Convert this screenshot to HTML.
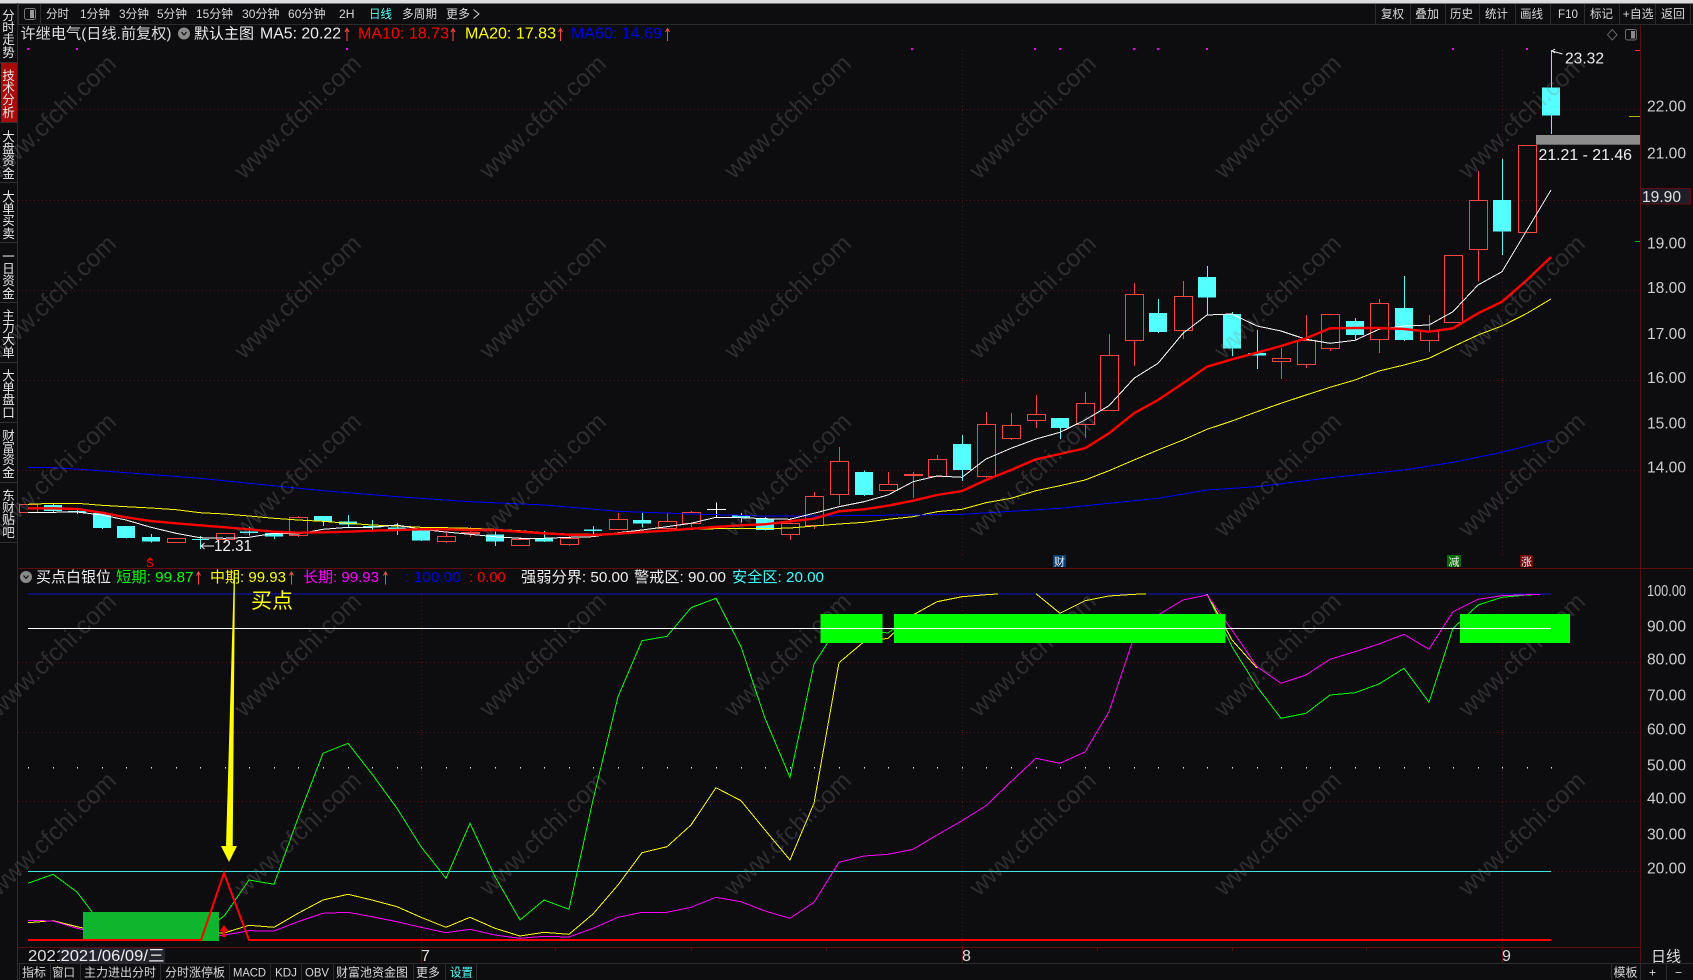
<!DOCTYPE html>
<html lang="zh"><head><meta charset="utf-8"><title>许继电气</title>
<style>
html,body{margin:0;padding:0;background:#0d0d10;width:1693px;height:980px;overflow:hidden}
svg{position:absolute;left:0;top:0;display:block}
text{font-family:"Liberation Sans","Noto Sans CJK SC",sans-serif;fill:#d8d8d8}
.t{font-size:12px}.h{font-size:15px}.a{font-size:16px;fill:#cfcfcf}
.w{font-size:24.7px;fill:rgba(128,128,128,.28)}
.c{shape-rendering:crispEdges}
.s{position:absolute;left:2px;width:13px;font:12.5px/12.2px "Liberation Sans","Noto Sans CJK SC",sans-serif;color:#e8e8e8;word-break:break-all;text-align:center}
</style></head><body>
<svg width="1693" height="980" viewBox="0 0 1693 980" xmlns="http://www.w3.org/2000/svg">
<rect width="1693" height="980" fill="#0d0d10"/>
<!-- top strip and toolbar -->
<rect width="1693" height="3.5" fill="#dcdcdc"/>
<path d="M18 24.5H1693" stroke="#2c2c2e"/>
<path d="M18.5 4V24M40.5 4V24M1375.5 4V24M1410.5 4V24M1445.5 4V24M1479.5 4V24M1515.5 4V24M1550.5 4V24M1584.5 4V24M1619.5 4V24M1655.5 4V24M1690.5 4V24" stroke="#2c2c2e"/>
<rect x="24.5" y="8.5" width="11" height="11" rx="2" fill="none" stroke="#777"/><rect x="30" y="10" width="4" height="8" fill="#999"/>
<g class="t">
<text class="t" x="46" y="18" textLength="23" lengthAdjust="spacingAndGlyphs">分时</text>
<text class="t" x="80" y="18" textLength="30" lengthAdjust="spacingAndGlyphs">1分钟</text>
<text class="t" x="119" y="18" textLength="30" lengthAdjust="spacingAndGlyphs">3分钟</text>
<text class="t" x="157" y="18" textLength="30" lengthAdjust="spacingAndGlyphs">5分钟</text>
<text class="t" x="196" y="18" textLength="37" lengthAdjust="spacingAndGlyphs">15分钟</text>
<text class="t" x="242" y="18" textLength="37.5" lengthAdjust="spacingAndGlyphs">30分钟</text>
<text class="t" x="288" y="18" textLength="37.5" lengthAdjust="spacingAndGlyphs">60分钟</text>
<text class="t" x="339" y="18" textLength="15.5" lengthAdjust="spacingAndGlyphs">2H</text>
<text class="t" x="369" y="18" textLength="23" lengthAdjust="spacingAndGlyphs" style="fill:#54ffff">日线</text>
<text class="t" x="402" y="18" textLength="35" lengthAdjust="spacingAndGlyphs">多周期</text>
<text class="t" x="446" y="18" textLength="24" lengthAdjust="spacingAndGlyphs">更多</text>
<path d="M473.5 9.5L479 14L473.5 18.5" fill="none" stroke="#d8d8d8"/>
<text class="t" x="1381" y="18" textLength="23" lengthAdjust="spacingAndGlyphs">复权</text>
<text class="t" x="1415" y="18" textLength="24" lengthAdjust="spacingAndGlyphs">叠加</text>
<text class="t" x="1450" y="18" textLength="23" lengthAdjust="spacingAndGlyphs">历史</text>
<text class="t" x="1485" y="18" textLength="23" lengthAdjust="spacingAndGlyphs">统计</text>
<text class="t" x="1520" y="18" textLength="23" lengthAdjust="spacingAndGlyphs">画线</text>
<text class="t" x="1558" y="18" textLength="20" lengthAdjust="spacingAndGlyphs">F10</text>
<text class="t" x="1590" y="18" textLength="23" lengthAdjust="spacingAndGlyphs">标记</text>
<text class="t" x="1622.7" y="18" textLength="31" lengthAdjust="spacingAndGlyphs">+自选</text>
<text class="t" x="1661" y="18" textLength="24" lengthAdjust="spacingAndGlyphs">返回</text>
</g>
<!-- sidebar -->
<path d="M17.5 3V980" stroke="#2c2c2e"/>
<rect x="1" y="63" width="16" height="59" fill="#a80a0a"/>
<path d="M0 62.5H17M0 122.5H17M0 182.5H17M0 242.5H17M0 302.5H17M0 362.5H17M0 422.5H17M0 482.5H17M0 542.5H17" stroke="#303032"/>
<!-- grids -->
<g stroke="#641212" stroke-dasharray="1 3" fill="none">
<path d="M18 109.5H1640M18 200.5H1640M18 290.5H1640M18 380.5H1640M18 470.5H1640"/>
<path d="M18 662.5H1640M18 732.5H1640M18 801.5H1640M18 871.5H1640"/>
<path d="M962.5 50V555M1502.5 50V555M962.5 594V947M1502.5 594V947M421.5 594V947"/>
</g>
<g stroke="#5f0c0c" fill="none">
<path d="M1640.5 25V963M18 568.5H1693M18 947.5H1640M555.5 947V951M691.5 947V951M826.5 947V951M1097.5 947V951M1232.5 947V951M1366.5 947V951M421.5 947V963M962.5 947V963M1502.5 947V963"/>
</g>
<path d="M18 963.5H1693" stroke="#2c2c2e"/>
<path d="M19.5 964V980M50.5 964V980M80.5 964V980M160.5 964V980M229.5 964V980M270.5 964V980M301.5 964V980M333.5 964V980M413.5 964V980M445.5 964V980M476.5 964V980M1611.5 964V980M1640.5 964V980M1666.5 964V980" stroke="#2c2c2e"/>
<!-- magenta dots -->
<g fill="#ff00ff"><rect x="27" y="48" width="2" height="2"/><rect x="76" y="48" width="2" height="2"/><rect x="346" y="48" width="2" height="2"/><rect x="911" y="48" width="2" height="2"/><rect x="1034" y="48" width="2" height="2"/><rect x="1059" y="48" width="2" height="2"/><rect x="1133" y="48" width="2" height="2"/><rect x="1157" y="48" width="2" height="2"/><rect x="1206" y="48" width="2" height="2"/><rect x="1452" y="48" width="2" height="2"/><rect x="1526" y="48" width="2" height="2"/></g>
<!-- red candles -->
<path fill="none" stroke="#f44444" d="
M19.5 504.5H37.5V512.5H19.5Z
M167.5 538.5H185.5V542.5H167.5Z
M225.5 539V543M216.5 533.5H234.5V539.5H216.5Z
M298.5 516V517.5M298.5 535.5V537M289.5 517.5H307.5V535.5H289.5Z
M446.5 533V536.5M446.5 541.5V543M437.5 536.5H455.5V541.5H437.5Z
M470.5 527V532M470.5 534V537M461.5 532.5H479.5V533.5H461.5Z
M520.5 537V539M511.5 539.5H529.5V545.5H511.5Z
M569.5 535V538M569.5 544.5V546M560.5 538.5H578.5V544.5H560.5Z
M618.5 513V519.5M609.5 519.5H627.5V529.5H609.5Z
M667.5 513V521.5M667.5 528.5V530M658.5 521.5H676.5V528.5H658.5Z
M691.5 511V512.5M691.5 523.5V527M682.5 512.5H700.5V523.5H682.5Z
M790.5 518V523.5M790.5 534V540M781.5 523.5H799.5V534.5H781.5Z
M814.5 492V496.5M814.5 525.5V529M805.5 496.5H823.5V525.5H805.5Z
M839.5 447V461.5M839.5 494.5V505M830.5 461.5H848.5V494.5H830.5Z
M888.5 472V484.5M879.5 484.5H897.5V490.5H879.5Z
M913.5 472V474.5M913.5 476V498M904.5 474.5H922.5V475.5H904.5Z
M937.5 455V459.5M928.5 459.5H946.5V476.5H928.5Z
M986.5 412V424.5M986.5 476.5V478M977.5 424.5H995.5V476.5H977.5Z
M1011.5 413V425.5M1011.5 438.5V440M1002.5 425.5H1020.5V438.5H1002.5Z
M1036.5 395V414.5M1036.5 420.5V428M1027.5 414.5H1045.5V420.5H1027.5Z
M1085.5 392V403.5M1085.5 424.5V438M1076.5 403.5H1094.5V424.5H1076.5Z
M1109.5 334V355.5M1100.5 355.5H1118.5V410.5H1100.5Z
M1134.5 283V294.5M1134.5 340.5V366M1125.5 294.5H1143.5V340.5H1125.5Z
M1183.5 281V296.5M1183.5 330.5V339M1174.5 296.5H1192.5V330.5H1174.5Z
M1281.5 348V358.5M1281.5 361.5V379M1272.5 358.5H1290.5V361.5H1272.5Z
M1306.5 315V340.5M1306.5 364.5V368M1297.5 340.5H1315.5V364.5H1297.5Z
M1330.5 348.5V351M1321.5 314.5H1339.5V348.5H1321.5Z
M1379.5 299V303.5M1379.5 339.5V353M1370.5 303.5H1388.5V339.5H1370.5Z
M1429.5 315V331.5M1429.5 340.5V352M1420.5 331.5H1438.5V340.5H1420.5Z
M1444.5 255.5H1462.5V322.5H1444.5Z
M1478.5 171V200.5M1478.5 249.5V281.5M1469.5 200.5H1487.5V249.5H1469.5Z
M1518.5 145.5H1536.5V232.5H1518.5Z"/>
<!-- cyan candles wicks -->
<path fill="none" stroke="#54ffff" d="M53.5 503V513M77.5 508V514M102.5 513V529M126.5 526V538.5M151.5 534V542.5M200.5 536V549M192 539.5H209M249.5 527V535.5M274.5 531V539M323.5 516V526M348.5 515V527.5M372.5 520V530M397.5 523V535M421.5 528V541M495.5 531.5V546M544.5 531V542M593.5 526V535M642.5 513V527.5M741.5 513V522.5M765.5 517V530.5M864.5 470.5V496M962.5 435V481M1060.5 418V439M1158.5 299V333M1207.5 266V315M1232.5 312V356M1257.5 330V369M1355.5 318V340M1404.5 276V341M1502.5 159V255M1551.5 50V134"/>
<path fill="#54ffff" d="M44 505h18v6H44ZM68 511h18v1.5H68ZM93 513h18v15H93ZM117 526h18v12H117ZM142 537h18v4.5H142ZM240 531.5h18v1.5h-18ZM265 533h18v3.5H265ZM314 516h18v5.5H314ZM339 521.5h18v3H339ZM363 526h18v1.5H363ZM388 527.5h18v2.5H388ZM412 530.5h18v10H412ZM486 534.5h18v7H486ZM535 538.5h18v3H535ZM584 529.5h18v1.5H584ZM633 520h18v3.5H633ZM732 515.5h18v2H732ZM756 518.5h18v11.5H756ZM855 472h18v23H855ZM953 444h18v26H953ZM1051 418h18v10h-18ZM1149 313h18v19H1149ZM1198 277h18v20.5H1198ZM1223 314h18v34.5H1223ZM1248 353h18v2.5H1248ZM1346 321h18v14H1346ZM1395 308h18v32H1395ZM1493 200h18v31.5H1493ZM1542 87.5h18v28H1542Z"/>
<path stroke="#fff" fill="none" d="M716.5 502.5V518M707 509.5H726"/>
<!-- MAs -->
<polyline class="c" fill="none" stroke="#ffff00" stroke-width="1" points="28,504.3 53,503.3 77,503.3 102,505.3 126,506.7 151,508 176,509.7 200,512.7 225,514 249,516 274,518.3 298,520 323,521.3 348,523.3 372,525 397,526 421,527.3 446,527.7 470,528.3 495,529.3 520,530.7 544,532.7 569,534 593,534.3 618,533.3 642,532 667,530.7 691,529.3 716,528.7 741,528.3 765,528.7 790,528 814,526 839,524 864,522.3 888,519.3 913,516.7 937,511.7 962,509.3 986,502.7 1011,498.3 1036,490.7 1060,485.7 1085,480 1109,470.7 1134,460 1158,450 1183,440 1207,429.3 1232,421 1257,411.7 1281,403.3 1306,395 1330,387.3 1355,380 1379,371 1404,365 1429,358.3 1453,346.7 1478,335 1502,326 1527,313.3 1551,299"/>
<polyline class="c" fill="none" stroke="#0000ff" stroke-width="1" points="28,467.7 52,467.7 76,469 126,472.7 200,478.3 249,483.3 323,490.7 397,496.7 470,501.7 544,505 618,511.3 691,514 765,516 850,515.7 962,514.3 1060,508.3 1158,498.3 1207,490 1257,486.7 1330,477.7 1404,470 1453,462.3 1502,452.3 1551,440"/>
<polyline class="c" fill="none" stroke="#ffffff" stroke-width="1" points="28,512.3 53,512.3 77,512 102,515 126,520 151,527.3 176,533.3 200,537.7 225,538.3 249,537.3 274,533.3 298,534 323,529.3 348,527.3 372,527.3 397,525 421,529.3 446,532 470,534.3 495,536.7 520,538.3 544,538.3 569,537.3 593,536.7 618,532.7 642,530 667,526.7 691,523.3 716,517.3 741,517.7 765,518.7 790,519.3 814,513.3 839,506.7 864,501.7 888,495 913,481.7 937,476 962,477.3 986,459 1011,448.3 1036,439 1060,432.3 1085,420 1109,405.7 1134,378.3 1158,363.3 1183,333.3 1207,315 1232,314 1257,326 1281,331 1306,339.3 1330,343.3 1355,340.3 1379,329.3 1404,326 1429,325 1453,311.7 1478,285 1502,271.7 1527,230 1551,190"/>
<polyline fill="none" stroke="#ff0000" stroke-width="2.4" points="28,508.3 53,508.3 77,509 102,512.7 126,517.3 151,521 176,523.3 200,525.3 225,527.3 249,529.3 274,531.7 298,532.7 323,532.3 348,531.7 372,530.7 397,530 421,529.3 446,529.3 470,530 495,530 520,531.7 544,533.3 569,534.7 593,535 618,533.7 642,532 667,530.7 691,528.7 716,527 741,525.3 765,524.3 790,521.3 814,518.7 839,511.3 864,509.3 888,505.7 913,500.7 937,495 962,491 986,480 1011,470 1036,459.3 1060,454 1085,448.3 1109,433.3 1134,413.3 1158,400 1183,383.3 1207,366.7 1232,359.3 1257,352.7 1281,346 1306,338.3 1330,328.3 1355,328 1379,328 1404,329 1429,331.7 1453,328.3 1478,313.3 1502,301.7 1527,280 1551,257"/>
<!-- top arrow, high/low labels -->
<path d="M1562.5 54L1552 51L1555 49M1552 51L1555 53" fill="none" stroke="#eee"/>
<text class="a" x="1565" y="63.5" textLength="39" lengthAdjust="spacingAndGlyphs" style="fill:#eee">23.32</text>
<path d="M214 546H201M204.5 543L201 546L204.5 549" fill="none" stroke="#eee"/>
<text class="a" x="214" y="551" textLength="38" lengthAdjust="spacingAndGlyphs" style="fill:#eee">12.31</text>
<rect x="1536" y="135" width="104" height="9.7" fill="#8c8c8c"/>
<text class="a" x="1538.5" y="160" textLength="93.500" lengthAdjust="spacingAndGlyphs" style="fill:#eee">21.21 - 21.46</text>
<!-- markers -->
<text x="150" y="567" font-size="12" text-anchor="middle" style="fill:#f00">S</text>
<path d="M150 557l2.5 3.5h-5Z" fill="#f00"/>
<rect x="1053" y="555" width="13" height="12" fill="#0c3c6c"/><text x="1059.5" y="565.5" font-size="11" text-anchor="middle" style="fill:#eee">财</text>
<rect x="1447" y="555" width="14" height="12" fill="#0a6a0a"/><text x="1454" y="565.5" font-size="11" text-anchor="middle" style="fill:#eee">减</text>
<rect x="1520" y="555" width="13" height="12" fill="#700808"/><text x="1526.5" y="565.5" font-size="11" text-anchor="middle" style="fill:#eee">涨</text>
<!-- lower lines -->
<path d="M28 594H1551" stroke="#1414c8" fill="none"/>
<g fill="#ddd"><rect x="28" y="767" width="1" height="1.5"/><rect x="53" y="767" width="1" height="1.5"/><rect x="77" y="767" width="1" height="1.5"/><rect x="102" y="767" width="1" height="1.5"/><rect x="126" y="767" width="1" height="1.5"/><rect x="151" y="767" width="1" height="1.5"/><rect x="176" y="767" width="1" height="1.5"/><rect x="200" y="767" width="1" height="1.5"/><rect x="225" y="767" width="1" height="1.5"/><rect x="249" y="767" width="1" height="1.5"/><rect x="274" y="767" width="1" height="1.5"/><rect x="298" y="767" width="1" height="1.5"/><rect x="323" y="767" width="1" height="1.5"/><rect x="348" y="767" width="1" height="1.5"/><rect x="372" y="767" width="1" height="1.5"/><rect x="397" y="767" width="1" height="1.5"/><rect x="421" y="767" width="1" height="1.5"/><rect x="446" y="767" width="1" height="1.5"/><rect x="470" y="767" width="1" height="1.5"/><rect x="495" y="767" width="1" height="1.5"/><rect x="520" y="767" width="1" height="1.5"/><rect x="544" y="767" width="1" height="1.5"/><rect x="569" y="767" width="1" height="1.5"/><rect x="593" y="767" width="1" height="1.5"/><rect x="618" y="767" width="1" height="1.5"/><rect x="642" y="767" width="1" height="1.5"/><rect x="667" y="767" width="1" height="1.5"/><rect x="691" y="767" width="1" height="1.5"/><rect x="716" y="767" width="1" height="1.5"/><rect x="741" y="767" width="1" height="1.5"/><rect x="765" y="767" width="1" height="1.5"/><rect x="790" y="767" width="1" height="1.5"/><rect x="814" y="767" width="1" height="1.5"/><rect x="839" y="767" width="1" height="1.5"/><rect x="864" y="767" width="1" height="1.5"/><rect x="888" y="767" width="1" height="1.5"/><rect x="913" y="767" width="1" height="1.5"/><rect x="937" y="767" width="1" height="1.5"/><rect x="962" y="767" width="1" height="1.5"/><rect x="986" y="767" width="1" height="1.5"/><rect x="1011" y="767" width="1" height="1.5"/><rect x="1036" y="767" width="1" height="1.5"/><rect x="1060" y="767" width="1" height="1.5"/><rect x="1085" y="767" width="1" height="1.5"/><rect x="1109" y="767" width="1" height="1.5"/><rect x="1134" y="767" width="1" height="1.5"/><rect x="1158" y="767" width="1" height="1.5"/><rect x="1183" y="767" width="1" height="1.5"/><rect x="1207" y="767" width="1" height="1.5"/><rect x="1232" y="767" width="1" height="1.5"/><rect x="1257" y="767" width="1" height="1.5"/><rect x="1281" y="767" width="1" height="1.5"/><rect x="1306" y="767" width="1" height="1.5"/><rect x="1330" y="767" width="1" height="1.5"/><rect x="1355" y="767" width="1" height="1.5"/><rect x="1379" y="767" width="1" height="1.5"/><rect x="1404" y="767" width="1" height="1.5"/><rect x="1429" y="767" width="1" height="1.5"/><rect x="1453" y="767" width="1" height="1.5"/><rect x="1478" y="767" width="1" height="1.5"/><rect x="1502" y="767" width="1" height="1.5"/><rect x="1527" y="767" width="1" height="1.5"/><rect x="1551" y="767" width="1" height="1.5"/></g>
<path d="M28 871.5H1551" stroke="#40e6e6" fill="none"/>
<g class="c" fill="none" stroke="#00ff00" stroke-width="1">
<polyline points="28,883.3 53,874.3 77,892 102,925 126,935 151,935 176,938 200,936 225,915 249,880 274,884.3 298,818.3 323,753.3 348,743.3 372,774 397,808.3 421,846.7 446,878.3 470,823.3 495,876.7 520,920 544,900 569,909.3 593,800 618,696.7 642,640.7 667,636.3 691,607.7 716,598.3 741,646.7 765,718.3 790,777.3 814,664 839,625 864,630 888,633 913,615 937,601.7 962,596.7 986,594.7 998,594"/>
<polyline points="1036,593.7 1060,613.3 1085,600.7 1109,596 1134,594.3 1146,594"/>
<polyline points="1207,594 1232,646.7 1257,686.7 1281,718.3 1306,713.3 1330,695 1355,692.7 1379,684 1404,668.3 1429,702.3 1453,628.3 1478,605 1502,597.3 1527,595 1540,594.3"/>
</g>
<g class="c" fill="none" stroke="#ffff00" stroke-width="1">
<polyline points="28,922.7 53,920.7 77,926.7 102,932 126,935 151,935 176,935 200,935 225,932.7 249,925.3 274,927.3 298,913.3 323,900 348,894.3 372,900 397,906.7 421,917.3 446,927.3 470,917.3 495,928.3 520,936 544,932.3 569,934.3 593,914 618,885 642,852.7 667,846.7 691,825 716,787.7 741,800.7 765,830 790,860 814,803.3 839,662.7 864,641.7 888,638.3 913,615 937,601.7 962,596.7 986,594.7 998,594"/>
<polyline points="1036,593.7 1060,613.3 1085,600.7 1109,596 1134,594.3 1146,594"/>
<polyline points="1207,594 1232,640 1257,668"/>
</g>
<polyline class="c" fill="none" stroke="#ff00ff" stroke-width="1" points="28,920.3 53,921 77,928.3 102,933 126,937 151,937 176,937 200,937 225,935 249,930.7 274,931 298,921.7 323,913.3 348,912.3 372,916.7 397,921.7 421,927.3 446,932.7 470,929.3 495,935 520,938.3 544,936.3 569,937 593,928.3 618,917.3 642,912.3 667,912.3 691,907.3 716,897.3 741,901.7 765,911 790,918.3 814,902.3 839,862.3 864,856 888,854.3 913,849.3 937,835 962,820.7 986,805.7 1011,781.7 1036,758.3 1060,763.3 1085,752 1109,711.7 1134,636.7 1158,615 1183,600 1207,595 1232,630 1257,666.7 1281,683.3 1306,675 1330,659.3 1355,651.7 1379,644 1404,634.3 1429,649.3 1453,611.7 1478,599.3 1502,595.7 1527,594.7 1540,594.3"/>
<!-- watermark -->
<g class="w">
<text class="w" transform="translate(-1,180) rotate(-44)" textLength="165">www.cfchi.com</text><text class="w" transform="translate(244,180) rotate(-44)" textLength="165">www.cfchi.com</text><text class="w" transform="translate(489,180) rotate(-44)" textLength="165">www.cfchi.com</text><text class="w" transform="translate(734,180) rotate(-44)" textLength="165">www.cfchi.com</text><text class="w" transform="translate(979,180) rotate(-44)" textLength="165">www.cfchi.com</text><text class="w" transform="translate(1224,180) rotate(-44)" textLength="165">www.cfchi.com</text><text class="w" transform="translate(1468,180) rotate(-44)" textLength="165">www.cfchi.com</text>
<text class="w" transform="translate(-1,360) rotate(-44)" textLength="165">www.cfchi.com</text><text class="w" transform="translate(244,360) rotate(-44)" textLength="165">www.cfchi.com</text><text class="w" transform="translate(489,360) rotate(-44)" textLength="165">www.cfchi.com</text><text class="w" transform="translate(734,360) rotate(-44)" textLength="165">www.cfchi.com</text><text class="w" transform="translate(979,360) rotate(-44)" textLength="165">www.cfchi.com</text><text class="w" transform="translate(1224,360) rotate(-44)" textLength="165">www.cfchi.com</text><text class="w" transform="translate(1468,360) rotate(-44)" textLength="165">www.cfchi.com</text>
<text class="w" transform="translate(-1,538) rotate(-44)" textLength="165">www.cfchi.com</text><text class="w" transform="translate(244,538) rotate(-44)" textLength="165">www.cfchi.com</text><text class="w" transform="translate(489,538) rotate(-44)" textLength="165">www.cfchi.com</text><text class="w" transform="translate(734,538) rotate(-44)" textLength="165">www.cfchi.com</text><text class="w" transform="translate(979,538) rotate(-44)" textLength="165">www.cfchi.com</text><text class="w" transform="translate(1224,538) rotate(-44)" textLength="165">www.cfchi.com</text><text class="w" transform="translate(1468,538) rotate(-44)" textLength="165">www.cfchi.com</text>
<text class="w" transform="translate(-1,718) rotate(-44)" textLength="165">www.cfchi.com</text><text class="w" transform="translate(244,718) rotate(-44)" textLength="165">www.cfchi.com</text><text class="w" transform="translate(489,718) rotate(-44)" textLength="165">www.cfchi.com</text><text class="w" transform="translate(734,718) rotate(-44)" textLength="165">www.cfchi.com</text><text class="w" transform="translate(979,718) rotate(-44)" textLength="165">www.cfchi.com</text><text class="w" transform="translate(1224,718) rotate(-44)" textLength="165">www.cfchi.com</text><text class="w" transform="translate(1468,718) rotate(-44)" textLength="165">www.cfchi.com</text>
<text class="w" transform="translate(-1,897) rotate(-44)" textLength="165">www.cfchi.com</text><text class="w" transform="translate(244,897) rotate(-44)" textLength="165">www.cfchi.com</text><text class="w" transform="translate(489,897) rotate(-44)" textLength="165">www.cfchi.com</text><text class="w" transform="translate(734,897) rotate(-44)" textLength="165">www.cfchi.com</text><text class="w" transform="translate(979,897) rotate(-44)" textLength="165">www.cfchi.com</text><text class="w" transform="translate(1224,897) rotate(-44)" textLength="165">www.cfchi.com</text><text class="w" transform="translate(1468,897) rotate(-44)" textLength="165">www.cfchi.com</text>
</g>
<!-- green blocks -->
<g fill="#00ff00"><rect x="820.5" y="614" width="62" height="29"/><rect x="894" y="614" width="331.5" height="29"/><rect x="1460" y="614" width="110" height="29"/></g>
<rect x="83" y="912" width="136" height="29" fill="#10b52e"/>
<path d="M28 628.5H1551" stroke="#fff" fill="none"/>
<!-- red signal -->
<polyline fill="none" stroke="#ff0000" stroke-width="2" points="28,940 201,940 224,873 249,940 1551,940"/>
<path d="M224 925l4.5 6h-3v6h-3v-6h-3Z" fill="#f00"/>
<!-- yellow arrow -->
<path d="M234 572H235L232.7 846H237L229 862L221 846H226Z" fill="#ffff00"/>
<text x="251" y="608" font-size="21" textLength="42" lengthAdjust="spacingAndGlyphs" style="fill:#ffff00">买点</text>
<!-- main header -->
<text class="h" x="20.5" y="38.5" textLength="151" lengthAdjust="spacingAndGlyphs" style="fill:#dcdcdc">许继电气(日线.前复权)</text>
<circle cx="184" cy="33.5" r="6" fill="#8a8a8a"/><path d="M181.5 32L184 35L186.5 32" fill="none" stroke="#111" stroke-width="1.2"/>
<text class="h" x="194" y="38.5" textLength="60" lengthAdjust="spacingAndGlyphs" style="fill:#eee">默认主图</text>
<text class="h" x="260" y="38.5" textLength="81" lengthAdjust="spacingAndGlyphs" style="fill:#eee;font-size:16px">MA5: 20.22</text>
<text class="h" x="358" y="38.5" textLength="91" lengthAdjust="spacingAndGlyphs" style="fill:#ff0000;font-size:16px">MA10: 18.73</text>
<text class="h" x="465" y="38.5" textLength="91" lengthAdjust="spacingAndGlyphs" style="fill:#ffff00;font-size:16px">MA20: 17.83</text>
<text class="h" x="571" y="38.5" textLength="91" lengthAdjust="spacingAndGlyphs" style="fill:#0000e6;font-size:16px">MA60: 14.69</text>
<path d="M347 41V29M345 32L347 28.5L349 32M453 41V29M451 32L453 28.5L455 32M560.5 41V29M558.5 32L560.5 28.5L562.5 32M667.5 41V29M665.5 32L667.5 28.5L669.5 32" fill="none" stroke="#ff4a4a"/>
<path d="M1612.3 29.5L1617 34.7L1612.3 40L1607.5 34.7Z" fill="none" stroke="#666"/>
<rect x="1625.5" y="29.5" width="11" height="10.5" rx="2" fill="none" stroke="#6e6e6e"/><rect x="1631" y="31" width="4" height="7.5" fill="#8a8a8a"/>
<!-- ticks -->
<path d="M1635 50.5H1640" stroke="#ff3030"/><path d="M1629 116.5H1640" stroke="#b5b500"/><path d="M1635 241.5H1640" stroke="#0fb52f"/>
<!-- lower header -->
<circle cx="26" cy="577" r="6" fill="#8a8a8a"/><path d="M23.5 575.5L26 578.5L28.500 575.5" fill="none" stroke="#111" stroke-width="1.2"/>
<text class="h" x="36" y="582" textLength="75" lengthAdjust="spacingAndGlyphs" style="fill:#eee">买点白银位</text>
<text class="h" x="116" y="582" textLength="77.5" lengthAdjust="spacingAndGlyphs" style="fill:#00ff00">短期: 99.87</text>
<text class="h" x="210" y="582" textLength="76" lengthAdjust="spacingAndGlyphs" style="fill:#ffff00">中期: 99.93</text>
<text class="h" x="303" y="582" textLength="76" lengthAdjust="spacingAndGlyphs" style="fill:#ff00ff">长期: 99.93</text>
<text class="h" x="405" y="582" textLength="56" lengthAdjust="spacingAndGlyphs" style="fill:#0000e6">: 100.00</text>
<text class="h" x="469" y="582" textLength="36.700" lengthAdjust="spacingAndGlyphs" style="fill:#f00">: 0.00</text>
<text class="h" x="521" y="582" textLength="107.500" lengthAdjust="spacingAndGlyphs" style="fill:#eee">强弱分界: 50.00</text>
<text class="h" x="634" y="582" textLength="92" lengthAdjust="spacingAndGlyphs" style="fill:#eee">警戒区: 90.00</text>
<text class="h" x="732" y="582" textLength="92" lengthAdjust="spacingAndGlyphs" style="fill:#40ffff">安全区: 20.00</text>
<path d="M198.500 584.5V572.5M196.5 575.5L198.500 572L200.500 575.5M291.5 584.5V572.5M289.5 575.5L291.5 572L293.5 575.5M385.5 584.5V572.5M383.5 575.5L385.5 572L387.5 575.5" fill="none" stroke="#ff4a4a"/>
<!-- right axis -->
<g>
<text class="a" x="1647" y="111.7" textLength="39" lengthAdjust="spacingAndGlyphs">22.00</text>
<text class="a" x="1647" y="158.7" textLength="39" lengthAdjust="spacingAndGlyphs">21.00</text>
<text class="a" x="1647" y="248.7" textLength="39" lengthAdjust="spacingAndGlyphs">19.00</text>
<text class="a" x="1647" y="293" textLength="39" lengthAdjust="spacingAndGlyphs">18.00</text>
<text class="a" x="1647" y="339" textLength="39" lengthAdjust="spacingAndGlyphs">17.00</text>
<text class="a" x="1647" y="383" textLength="39" lengthAdjust="spacingAndGlyphs">16.00</text>
<text class="a" x="1647" y="428.7" textLength="39" lengthAdjust="spacingAndGlyphs">15.00</text>
<text class="a" x="1647" y="472.7" textLength="39" lengthAdjust="spacingAndGlyphs">14.00</text>
<rect x="1640.5" y="188.5" width="50" height="15.5" fill="#1e1e28" stroke="#5f0c0c"/>
<text class="a" x="1642" y="202" textLength="39" lengthAdjust="spacingAndGlyphs" style="fill:#e0e0e0">19.90</text>
<text class="a" x="1647" y="596" textLength="39" lengthAdjust="spacingAndGlyphs">100.00</text>
<text class="a" x="1647" y="631.7" textLength="39" lengthAdjust="spacingAndGlyphs">90.00</text>
<text class="a" x="1647" y="664.3" textLength="39" lengthAdjust="spacingAndGlyphs">80.00</text>
<text class="a" x="1647" y="700.7" textLength="39" lengthAdjust="spacingAndGlyphs">70.00</text>
<text class="a" x="1647" y="734.7" textLength="39" lengthAdjust="spacingAndGlyphs">60.00</text>
<text class="a" x="1647" y="770.7" textLength="39" lengthAdjust="spacingAndGlyphs">50.00</text>
<text class="a" x="1647" y="803.7" textLength="39" lengthAdjust="spacingAndGlyphs">40.00</text>
<text class="a" x="1647" y="839.7" textLength="39" lengthAdjust="spacingAndGlyphs">30.00</text>
<text class="a" x="1647" y="873.7" textLength="39" lengthAdjust="spacingAndGlyphs">20.00</text>
</g>
<!-- date bar -->
<text class="a" x="28" y="961" textLength="37" lengthAdjust="spacingAndGlyphs" style="fill:#ddd">2021</text>
<rect x="60" y="948" width="105" height="15" fill="#24242e"/>
<text class="a" x="60.5" y="961" textLength="104" lengthAdjust="spacingAndGlyphs" style="fill:#eee">2021/06/09/三</text>
<text class="a" x="421" y="961" style="fill:#ddd">7</text>
<text class="a" x="962" y="961" style="fill:#ddd">8</text>
<text class="a" x="1502" y="961" style="fill:#ddd">9</text>
<text x="1651" y="961.7" font-size="15" textLength="30" lengthAdjust="spacingAndGlyphs" style="fill:#ddd">日线</text>
<!-- bottom toolbar -->
<text class="t" x="22" y="976.5" textLength="24" lengthAdjust="spacingAndGlyphs">指标</text>
<text class="t" x="52" y="976.5" textLength="23" lengthAdjust="spacingAndGlyphs">窗口</text>
<text class="t" x="84" y="976.5" textLength="72" lengthAdjust="spacingAndGlyphs">主力进出分时</text>
<text class="t" x="165" y="976.5" textLength="60" lengthAdjust="spacingAndGlyphs">分时涨停板</text>
<text class="t" x="233" y="976.5" textLength="33" lengthAdjust="spacingAndGlyphs">MACD</text>
<text class="t" x="275" y="976.5" textLength="22" lengthAdjust="spacingAndGlyphs">KDJ</text>
<text class="t" x="305" y="976.5" textLength="24" lengthAdjust="spacingAndGlyphs">OBV</text>
<text class="t" x="336" y="976.5" textLength="72" lengthAdjust="spacingAndGlyphs">财富池资金图</text>
<text class="t" x="416" y="976.5" textLength="24" lengthAdjust="spacingAndGlyphs">更多</text>
<text class="t" x="450" y="976.5" textLength="23" lengthAdjust="spacingAndGlyphs" style="fill:#54ffff">设置</text>
<text class="t" x="1613.5" y="976.5" textLength="24" lengthAdjust="spacingAndGlyphs">模板</text>
<text class="t" x="1649" y="976.5">+</text>
<text class="t" x="1675" y="976.5">−</text>
</svg>
<div class="s" style="top:10px">分时走势</div>
<div class="s" style="top:70px">技术分析</div>
<div class="s" style="top:131px">大盘资金</div>
<div class="s" style="top:191px">大单买卖</div>
<div class="s" style="top:251px">一日资金</div>
<div class="s" style="top:310px">主力大单</div>
<div class="s" style="top:370px">大单盘口</div>
<div class="s" style="top:430px">财富资金</div>
<div class="s" style="top:490px">东财贴吧</div>
</body></html>
